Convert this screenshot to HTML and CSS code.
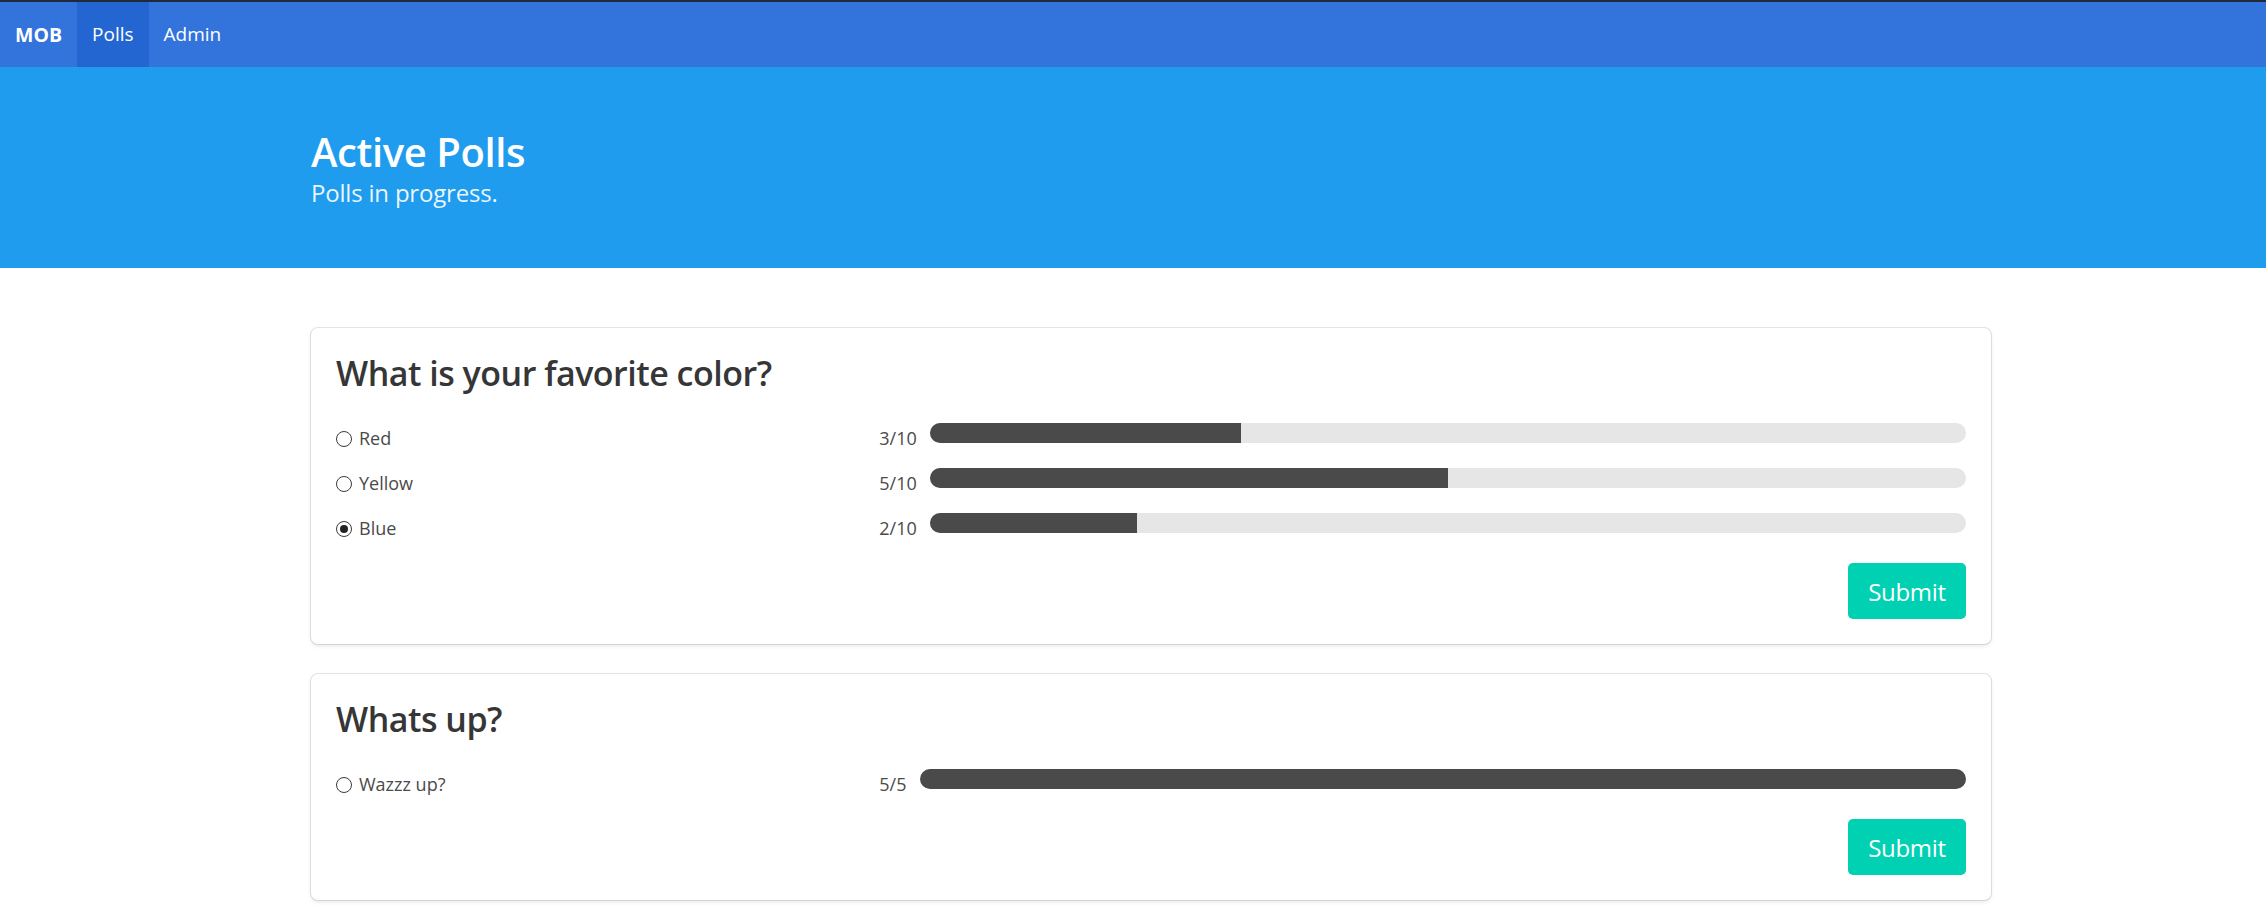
FILE: index.html
```html
<!DOCTYPE html>
<html lang="en">
<head>
<meta charset="utf-8">
<title>MOB - Active Polls</title>
<link rel="stylesheet" href="styles.css">
</head>
<body>
<nav class="navbar">
  <a class="nav-item brand" href="#">MOB</a>
  <a class="nav-item is-active" href="#">Polls</a>
  <a class="nav-item" href="#">Admin</a>
</nav>

<section class="hero">
  <div class="container">
    <h1 class="hero-title">Active Polls</h1>
    <h2 class="hero-subtitle">Polls in progress.</h2>
  </div>
</section>

<section class="section">
  <div class="container">
    <form class="box">
      <h2 class="poll-title">What is your favorite color?</h2>
      <div class="option">
        <label class="choice"><input type="radio" name="poll1"><span>Red</span></label>
        <div class="result">
          <span class="count">3/10</span>
          <div class="progress"><div class="fill" style="width:30%"></div></div>
        </div>
      </div>
      <div class="option">
        <label class="choice"><input type="radio" name="poll1"><span>Yellow</span></label>
        <div class="result">
          <span class="count">5/10</span>
          <div class="progress"><div class="fill" style="width:50%"></div></div>
        </div>
      </div>
      <div class="option">
        <label class="choice"><input type="radio" name="poll1" checked><span>Blue</span></label>
        <div class="result">
          <span class="count">2/10</span>
          <div class="progress"><div class="fill" style="width:20%"></div></div>
        </div>
      </div>
      <div class="actions"><button type="button" class="button">Submit</button></div>
    </form>

    <form class="box">
      <h2 class="poll-title">Whats up?</h2>
      <div class="option">
        <label class="choice"><input type="radio" name="poll2"><span>Wazzz up?</span></label>
        <div class="result">
          <span class="count">5/5</span>
          <div class="progress"><div class="fill" style="width:100%"></div></div>
        </div>
      </div>
      <div class="actions"><button type="button" class="button">Submit</button></div>
    </form>
  </div>
</section>
</body>
</html>
```

FILE: styles.css
```css
* { box-sizing: border-box; }

html, body {
  margin: 0;
  padding: 0;
  background: #fff;
}

body {
  font-family: "Open Sans", "Noto Sans", "Liberation Sans", sans-serif;
  color: #4a4a4a;
  font-size: 20px;
  line-height: 1.5;
}

/* Navbar */
.navbar {
  display: flex;
  align-items: stretch;
  height: 67px;
  border-top: 2px solid #1f2a3a;
  background: #3273dc;
}

.nav-item {
  display: flex;
  align-items: center;
  padding: 0 15px;
  color: #fff;
  text-decoration: none;
  font-size: 19px;
}

.nav-item.brand {
  font-weight: 700;
  font-size: 19.5px;
}

.nav-item.is-active {
  background: #2366d1;
}

/* Hero */
.hero {
  background: #209cee;
  padding: 62px 0 60px;
}

.container {
  width: 1680px;
  margin-left: 311px;
}

.hero-title {
  margin: 0 0 3px;
  font-size: 40px;
  line-height: 45px;
  font-weight: 600;
  color: #fff;
  letter-spacing: -0.4px;
}

.hero-subtitle {
  margin: 0;
  font-size: 24px;
  line-height: 31px;
  font-weight: 400;
  color: rgba(255, 255, 255, 0.92);
  letter-spacing: -0.2px;
}

/* Section */
.section {
  padding: 60px 0 0;
}

.box {
  display: block;
  background: #fff;
  border-radius: 7px;
  padding: 25px;
  margin: 0 0 30px;
  box-shadow: 0 2px 4px rgba(10, 10, 10, 0.1), 0 0 0 1px rgba(10, 10, 10, 0.1);
}

.poll-title {
  margin: 0 0 30px;
  font-size: 34px;
  line-height: 40px;
  font-weight: 600;
  color: #363636;
  letter-spacing: -0.5px;
}

.option {
  display: grid;
  grid-template-columns: 1fr 2fr;
  margin-bottom: 15px;
}

.choice {
  display: flex;
  align-items: center;
  height: 30px;
  padding-top: 1px;
  font-size: 18px;
  color: #4a4a4a;
}

.choice input {
  appearance: none;
  -webkit-appearance: none;
  width: 16px;
  height: 16px;
  margin: 0 7px 0 0;
  border: 1px solid #3a3a3a;
  border-radius: 50%;
  background: #fff;
  position: relative;
  flex: none;
}

.choice input:checked::after {
  content: "";
  position: absolute;
  left: 3px;
  top: 3px;
  width: 8px;
  height: 8px;
  border-radius: 50%;
  background: #222;
}

.result {
  display: flex;
  align-items: flex-start;
}

.count {
  font-size: 18px;
  line-height: 30px;
  margin-right: 13px;
  color: #4a4a4a;
}

.progress {
  flex: 1;
  height: 20px;
  border-radius: 10px;
  background: #e6e6e6;
  overflow: hidden;
}

.fill {
  height: 100%;
  background: #4a4a4a;
}

.actions {
  display: flex;
  justify-content: flex-end;
  margin-top: 20px;
}

.button {
  width: 118px;
  height: 56px;
  padding: 0;
  border: none;
  border-radius: 5px;
  background: #00d1b2;
  color: #fff;
  font-family: inherit;
  font-size: 24px;
  letter-spacing: -0.3px;
  cursor: pointer;
}
```
